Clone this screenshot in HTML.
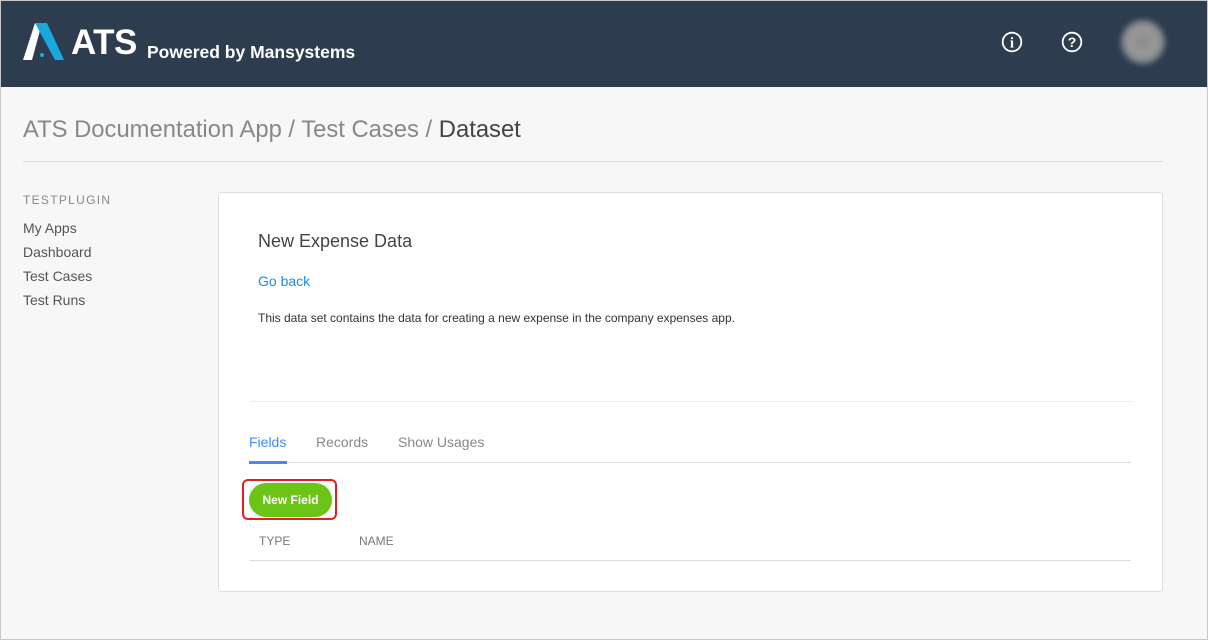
<!DOCTYPE html>
<html><head><meta charset="utf-8"><style>
*{box-sizing:border-box;margin:0;padding:0}
body{width:1208px;height:640px;overflow:hidden;background:#f7f7f7;font-family:"Liberation Sans",Arial,sans-serif;position:relative}
.hdr{position:absolute;left:0;top:0;width:1208px;height:87px;background:#2d3d4f}
.abs{position:absolute}
</style></head><body>
<div class="hdr">
 <svg class="abs" style="left:23px;top:23px" width="44" height="38" viewBox="0 0 44 38">
  <polygon points="0,37 12,0 19,0 9,37" fill="#fff"/>
  <polygon points="12,0 24,0 41,37 32,37" fill="#1aa6e0"/>
  <circle cx="19" cy="32" r="2" fill="#1aa6e0"/>
 </svg>
 <div class="abs" style="left:71px;top:23px;color:#fff;font-weight:bold;font-size:35px;letter-spacing:-0.5px">ATS</div>
 <div class="abs" style="left:147px;top:42px;color:#fff;font-weight:bold;font-size:17.5px">Powered by Mansystems</div>
 <svg class="abs" style="left:1001px;top:31px" width="22" height="22" viewBox="0 0 22 22"><circle cx="11" cy="11" r="9.3" fill="none" stroke="#fff" stroke-width="1.8"/><text x="11" y="16.5" text-anchor="middle" fill="#fff" font-family="Liberation Serif" font-weight="bold" font-size="15">i</text></svg>
 <svg class="abs" style="left:1061px;top:31px" width="22" height="22" viewBox="0 0 22 22"><circle cx="11" cy="11" r="9.3" fill="none" stroke="#fff" stroke-width="1.8"/><text x="11" y="16" text-anchor="middle" fill="#fff" font-family="Liberation Sans" font-weight="bold" font-size="14">?</text></svg>
 <div class="abs" style="left:1121px;top:20px;width:44px;height:44px;border-radius:50%;background:radial-gradient(circle,#8a8a8a 0%,#9a9a9a 45%,#6c737c 80%,#2d3d4f 100%);filter:blur(3px)"></div>
</div>
<div class="abs" style="left:23px;top:116px;font-size:23.8px;color:#888">ATS Documentation App / Test Cases / <span style="color:#444">Dataset</span></div>
<div class="abs" style="left:23px;top:161px;width:1140px;height:1px;background:#ddd"></div>
<div class="abs" style="left:23px;top:193px;font-size:12px;letter-spacing:1.3px;color:#888">TESTPLUGIN</div>
<div class="abs" style="left:23px;top:216px;font-size:14px;color:#555;line-height:24px">My Apps<br>Dashboard<br>Test Cases<br>Test Runs</div>
<div class="abs" style="left:218px;top:192px;width:945px;height:400px;background:#fff;border:1px solid #ddd;border-radius:3px">
 <div class="abs" style="left:39px;top:38px;font-size:18px;color:#444">New Expense Data</div>
 <div class="abs" style="left:39px;top:80px;font-size:14px;color:#1a8ee0">Go back</div>
 <div class="abs" style="left:39px;top:118px;font-size:12px;color:#333">This data set contains the data for creating a new expense in the company expenses app.</div>
 <div class="abs" style="left:31px;top:208px;width:882px;height:1px;background:#eee"></div>
 <div class="abs" style="left:30px;top:241px;font-size:14px;color:#3d8ef0">Fields</div>
 <div class="abs" style="left:97px;top:241px;font-size:14px;color:#888">Records</div>
 <div class="abs" style="left:179px;top:241px;font-size:14px;color:#888">Show Usages</div>
 <div class="abs" style="left:30px;top:269px;width:882px;height:1px;background:#ddd"></div>
 <div class="abs" style="left:30px;top:268px;width:38px;height:3px;background:#3d8ef0"></div>
 <div class="abs" style="left:23px;top:286px;width:95px;height:41px;border:2px solid #e02020;border-radius:6px"></div>
 <div class="abs" style="left:30px;top:290px;width:83px;height:34px;border-radius:17px;background:#6cc416;color:#fff;font-weight:bold;font-size:12px;text-align:center;line-height:34px">New Field</div>
 <div class="abs" style="left:40px;top:341px;font-size:12px;color:#777">TYPE</div>
 <div class="abs" style="left:140px;top:341px;font-size:12px;color:#777">NAME</div>
 <div class="abs" style="left:30px;top:367px;width:882px;height:1px;background:#ddd"></div>
</div>
<div class="abs" style="left:0;top:0;width:1208px;height:640px;border:1px solid #c8c8c8;pointer-events:none"></div>
</body></html>
